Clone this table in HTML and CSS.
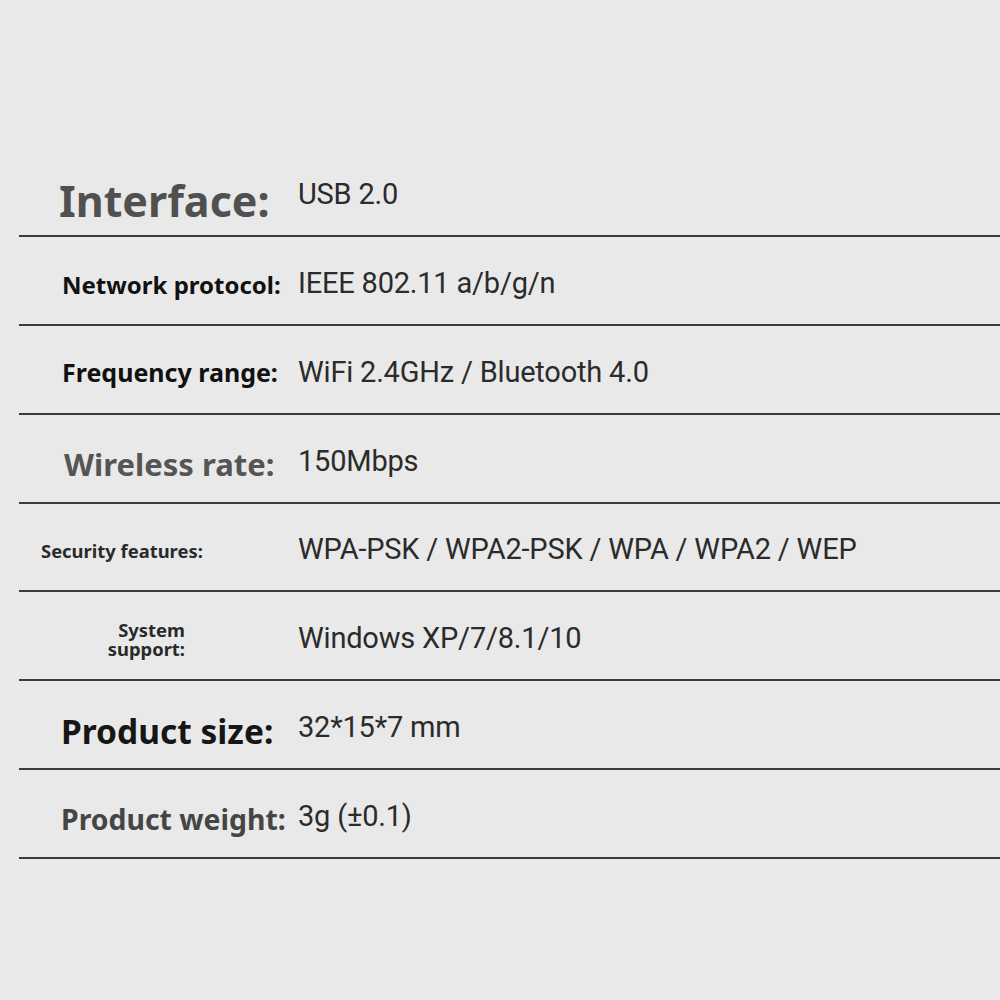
FILE: index.html
```html
<!DOCTYPE html>
<html lang="en">
<head>
<meta charset="utf-8">
<title>Specifications</title>
<link rel="stylesheet" href="styles.css">
</head>
<body>
<main class="spec-table">
  <div class="spec-row">
    <div class="spec-label label-interface">Interface:</div>
    <div class="spec-value value-interface">USB 2.0</div>
  </div>
  <div class="spec-row">
    <div class="spec-label label-network">Network protocol:</div>
    <div class="spec-value">IEEE 802.11 a/b/g/n</div>
  </div>
  <div class="spec-row">
    <div class="spec-label label-frequency">Frequency range:</div>
    <div class="spec-value">WiFi 2.4GHz / Bluetooth 4.0</div>
  </div>
  <div class="spec-row">
    <div class="spec-label label-wireless">Wireless rate:</div>
    <div class="spec-value">150Mbps</div>
  </div>
  <div class="spec-row">
    <div class="spec-label label-security">Security features:</div>
    <div class="spec-value">WPA-PSK / WPA2-PSK / WPA / WPA2 / WEP</div>
  </div>
  <div class="spec-row">
    <div class="spec-label label-system">System<br>support:</div>
    <div class="spec-value">Windows XP/7/8.1/10</div>
  </div>
  <div class="spec-row">
    <div class="spec-label label-size">Product size:</div>
    <div class="spec-value">32*15*7 mm</div>
  </div>
  <div class="spec-row">
    <div class="spec-label label-weight">Product weight:</div>
    <div class="spec-value">3g (±0.1)</div>
  </div>
</main>
</body>
</html>
```

FILE: styles.css
```css
html, body {
  margin: 0;
  padding: 0;
  background: #e9e9e9;
}

body {
  width: 1000px;
  height: 1000px;
  overflow: hidden;
}

.spec-table {
  padding-top: 148.5px;
  margin-left: 19px;
}

.spec-row {
  display: grid;
  grid-template-columns: 279px 1fr;
  align-items: center;
  height: 88.75px;
  box-sizing: border-box;
  border-bottom: 2px solid #3a3a3a;
}

.spec-label {
  font-family: "Noto Sans", "Open Sans", sans-serif;
  font-weight: 700;
  color: #111;
  white-space: nowrap;
}

.spec-value {
  font-family: Roboto, "Liberation Sans", sans-serif;
  font-weight: 400;
  font-size: 29px;
  color: #2b2b2b;
  letter-spacing: -0.2px;
  white-space: nowrap;
  margin-top: 5px;
}

.spec-value.value-interface {
  margin-top: 4px;
}

.label-interface {
  font-size: 43px;
  color: #505050;
  padding-left: 40px;
  margin-top: 17px;
}

.label-network {
  font-size: 24px;
  padding-left: 43px;
  margin-top: 7px;
}

.label-frequency {
  font-size: 25px;
  padding-left: 43px;
  margin-top: 6px;
}

.label-wireless {
  font-size: 31px;
  color: #555;
  padding-left: 45px;
  margin-top: 11px;
}

.label-security {
  font-size: 18.4px;
  color: #2a2a2a;
  padding-left: 22px;
  margin-top: 7px;
}

.label-system {
  font-size: 18.4px;
  line-height: 19px;
  color: #2a2a2a;
  text-align: right;
  width: 166px;
  margin-top: 7px;
}

.label-size {
  font-size: 33.5px;
  color: #161616;
  padding-left: 42px;
  margin-top: 13px;
}

.label-weight {
  font-size: 28.4px;
  color: #454545;
  padding-left: 42px;
  margin-top: 11px;
}
```
